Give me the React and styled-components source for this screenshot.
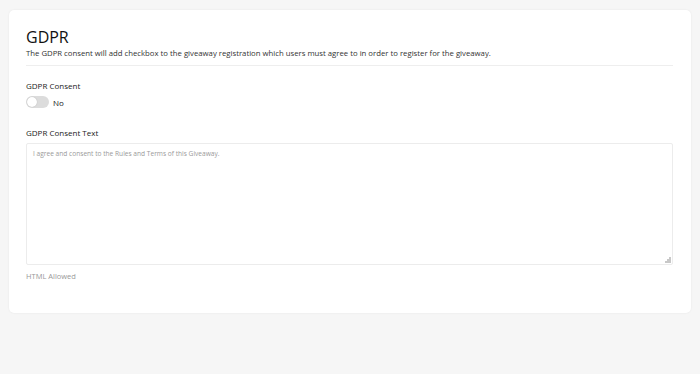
import styled, { createGlobalStyle } from "styled-components";
import { useState } from "react";

const Global = createGlobalStyle`
  html, body { margin: 0; padding: 0; background: #f6f6f6; }
  body { font-family: "Open Sans", "Noto Sans", sans-serif; color: #222; }
  * { box-sizing: border-box; }
`;

const Page = styled.div`
  padding: 10px 9px;
`;

const Card = styled.section`
  background: #fff;
  border-radius: 5px;
  box-shadow: 0 0 2px rgba(0, 0, 0, 0.08);
  padding: 17px 18px 31px 17px;
`;

const Title = styled.h2`
  margin: 0;
  font-size: 16px;
  font-weight: 400;
  line-height: 20px;
  color: #111;
`;

const Lead = styled.p`
  margin: 0;
  font-size: 7.75px;
  line-height: 12px;
  color: #333;
`;

const Divider = styled.hr`
  margin: 6px 0 14px;
  border: 0;
  border-top: 1px solid #eeeeee;
`;

const Field = styled.div`
  display: flex;
  flex-direction: column;
  margin-bottom: ${(p) => p.$gap || 0}px;
`;

const Label = styled.label`
  font-size: 8px;
  line-height: 12px;
  color: #222;
  margin-bottom: 4px;
`;

const SwitchRow = styled.div`
  display: flex;
  align-items: center;
  gap: 4px;
  font-size: 8px;
  color: #222;
`;

const Track = styled.button`
  position: relative;
  width: 23px;
  height: 12px;
  border: 0;
  padding: 0;
  border-radius: 6px;
  background: ${(p) => (p.$on ? "#4a90e2" : "#dcdcdc")};
  cursor: pointer;
`;

const Knob = styled.span`
  position: absolute;
  top: 1px;
  left: ${(p) => (p.$on ? "12px" : "1px")};
  width: 10px;
  height: 10px;
  border-radius: 50%;
  background: #fff;
  box-shadow: 0 0 1px rgba(0, 0, 0, 0.25);
`;

const AreaWrap = styled.div`
  position: relative;
  height: 122px;
`;

const TextArea = styled.textarea`
  display: block;
  width: 100%;
  height: 100%;
  border: 1px solid #ececec;
  border-radius: 2px;
  padding: 5px 6px;
  font-family: "Open Sans", "Noto Sans", sans-serif;
  font-size: 6.6px;
  color: #444;
  outline: none;
  resize: none;
  &::placeholder { color: #9a9a9a; }
`;

const Grip = styled.svg`
  position: absolute;
  right: 2px;
  bottom: 2px;
  width: 6px;
  height: 6px;
  pointer-events: none;
`;

const Hint = styled.small`
  margin-top: 5px;
  font-size: 7.5px;
  line-height: 12px;
  color: #999;
`;

export default function App() {
  const [on, setOn] = useState(false);
  return (
    <>
      <Global />
      <Page>
        <Card>
          <Title>GDPR</Title>
          <Lead>
            The GDPR consent will add checkbox to the giveaway registration which users must agree to in order to register for the giveaway.
          </Lead>
          <Divider />
          <Field $gap={19}>
            <Label>GDPR Consent</Label>
            <SwitchRow>
              <Track $on={on} onClick={() => setOn(!on)}>
                <Knob $on={on} />
              </Track>
              {on ? "Yes" : "No"}
            </SwitchRow>
          </Field>
          <Field>
            <Label>GDPR Consent Text</Label>
            <AreaWrap>
              <TextArea placeholder="I agree and consent to the Rules and Terms of this Giveaway." />
              <Grip viewBox="0 0 6 6">
                <rect x="4" y="0" width="2" height="2" fill="#c8c8c8" />
                <rect x="2" y="2" width="2" height="2" fill="#c8c8c8" />
                <rect x="4" y="2" width="2" height="2" fill="#c8c8c8" />
                <rect x="0" y="4" width="2" height="2" fill="#c8c8c8" />
                <rect x="2" y="4" width="2" height="2" fill="#c8c8c8" />
                <rect x="4" y="4" width="2" height="2" fill="#c8c8c8" />
              </Grip>
            </AreaWrap>
            <Hint>HTML Allowed</Hint>
          </Field>
        </Card>
      </Page>
    </>
  );
}
